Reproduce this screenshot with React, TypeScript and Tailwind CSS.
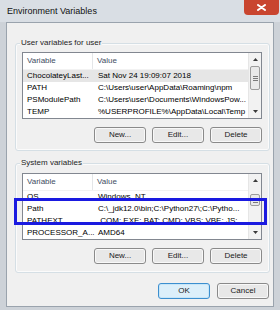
import clsx from "clsx";

type Row = [string, string];

const USER_ROWS: Row[] = [
  ["ChocolateyLast...", "Sat Nov 24 19:09:07 2018"],
  ["PATH", "C:\\Users\\user\\AppData\\Roaming\\npm"],
  ["PSModulePath", "C:\\Users\\user\\Documents\\WindowsPow..."],
  ["TEMP", "%USERPROFILE%\\AppData\\Local\\Temp"],
];

const SYS_ROWS: Row[] = [
  ["OS", "Windows_NT"],
  ["Path", "C:\\_jdk12.0\\bin;C:\\Python27\\;C:\\Pytho..."],
  ["PATHEXT", ".COM;.EXE;.BAT;.CMD;.VBS;.VBE;.JS;...."],
  ["PROCESSOR_A...", "AMD64"],
];

function Btn({ label, primary }: { label: string; primary?: boolean }) {
  return (
    <div
      className={clsx(
        "w-[52px] h-[16px] rounded-[3px] border flex items-center justify-center text-[8px] text-[#1a1a1a]",
        primary
          ? "border-[#3c8fcf] bg-[#dceffa] shadow-[inset_0_0_0_1px_#c8e6f8]"
          : "border-[#8a8a8a] bg-[#e8e8e8] shadow-[inset_0_0_0_1px_#f8f8f8]"
      )}
    >
      {label}
    </div>
  );
}

function Arrow({ up }: { up?: boolean }) {
  return (
    <div className="h-[13px] flex items-center justify-center">
      <svg width="5" height="3" viewBox="0 0 5 3">
        <path d={up ? "M0 3 L2.5 0 L5 3 Z" : "M0 0 L2.5 3 L5 0 Z"} fill="#3a3a3a" />
      </svg>
    </div>
  );
}

function ScrollBar({ thumbTop, thumbH }: { thumbTop: string; thumbH: string }) {
  return (
    <div className="w-[13px] flex flex-col bg-[#f2f2f2] border-l border-[#e6e6e6]">
      <Arrow up />
      <div className="flex-1 flex flex-col">
        <div className={thumbTop} />
        <div
          className={clsx(
            "mx-[1px] rounded-[2px] border border-[#9c9c9c] bg-[#e9e9e9] flex flex-col items-center justify-center gap-[1px]",
            thumbH
          )}
        >
          <div className="w-[5px] h-px bg-[#7a7a7a]" />
          <div className="w-[5px] h-px bg-[#7a7a7a]" />
          <div className="w-[5px] h-px bg-[#7a7a7a]" />
        </div>
      </div>
      <Arrow />
    </div>
  );
}

function VarList({ rows, selected, thumbTop, thumbH }: { rows: Row[]; selected?: number; thumbTop: string; thumbH: string }) {
  return (
    <div className="w-[240px] h-[67px] flex border border-[#828790] bg-white">
      <div className="flex-1 min-w-0 flex flex-col overflow-hidden">
        <div className="h-[17px] flex text-[8px] text-[#3e4d62] border-b border-[#f2f2f2]">
          <div className="w-[70px] h-full pl-[4px] flex items-center border-r border-[#e4e6e8]">Variable</div>
          <div className="pl-[4px] flex items-center">Value</div>
        </div>
        {rows.map(([k, v], i) => (
          <div
            key={k}
            className={clsx("h-[12px] flex items-center text-[8px] text-black whitespace-nowrap", i === selected && "bg-[#e6e6e6]")}
          >
            <div className="w-[71px] pl-[4px]">{k}</div>
            <div className="pl-[4px]">{v}</div>
          </div>
        ))}
      </div>
      <ScrollBar thumbTop={thumbTop} thumbH={thumbH} />
    </div>
  );
}

function Group({ title, className, children }: { title: string; className?: string; children: React.ReactNode }) {
  return (
    <div className={clsx("relative w-[255px] rounded-[3px] border border-[#d5dfe5] shadow-[inset_0_0_0_1px_#fbfbfb] pl-[6px] pr-[7px]", className)}>
      <span className="absolute -top-[6px] left-[4px] px-[1px] bg-[#f0f0f0] text-[8px] leading-[10px] text-[#1e1e1e]">{title}</span>
      {children}
    </div>
  );
}

export default function App() {
  return (
    <div className="relative w-[280px] h-[310px] overflow-hidden bg-[#cdd2d8] font-['Liberation_Sans',Arial,sans-serif]">
      {/* title bar */}
      <div className="h-[22px] flex items-start bg-[#d9dee4]">
        <span className="mt-[6px] ml-[7px] text-[9px] leading-[11px] text-[#111]">Environment Variables</span>
        <div className="ml-auto mr-px w-[35px] h-[15px] rounded-b-[4px] bg-[#c9452f] flex items-center justify-center">
          <svg width="9" height="7" viewBox="0 0 9 7">
            <path d="M1 1 L8 6 M8 1 L1 6" stroke="#ffffff" strokeWidth="2" strokeLinecap="round" />
          </svg>
        </div>
      </div>

      {/* client */}
      <div className="ml-[6px] w-[268px] h-[285px] bg-[#f0f0f0] border border-[#9aa3ad] pl-[8px]">
        <Group title="User variables for user" className="mt-[20px] pt-[8px] pb-[7px]">
          <VarList rows={USER_ROWS} selected={0} thumbTop="h-[0px]" thumbH="h-[24px]" />
          <div className="mt-[8px] flex justify-end gap-[6px]">
            <Btn label="New..." />
            <Btn label="Edit..." />
            <Btn label="Delete" />
          </div>
        </Group>

        <Group title="System variables" className="mt-[12px] pt-[9px] pb-[8px]">
          <VarList rows={SYS_ROWS} thumbTop="h-[7px]" thumbH="h-[12px]" />
          <div className="mt-[8px] flex justify-end gap-[6px]">
            <Btn label="New..." />
            <Btn label="Edit..." />
            <Btn label="Delete" />
          </div>
        </Group>

        <div className="w-[255px] mt-[10px] pr-[1px] flex justify-end gap-[7px]">
          <Btn label="OK" primary />
          <Btn label="Cancel" />
        </div>
      </div>

      {/* highlight drawn over the Path row */}
      <div className="absolute left-[14px] top-[198px] w-[253px] h-[27px] border-[3px] border-[#1a1ae0]" />
    </div>
  );
}
